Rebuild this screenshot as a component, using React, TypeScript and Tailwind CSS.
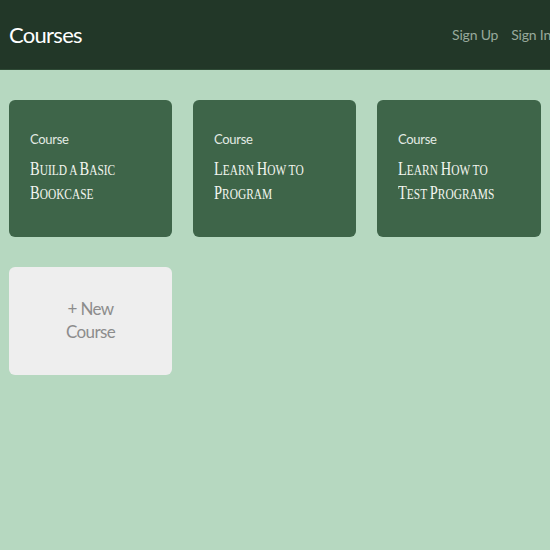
const courses = [
  { id: 1, lines: ["Build a Basic", "Bookcase"] },
  { id: 2, lines: ["Learn How to", "Program"] },
  { id: 3, lines: ["Learn How to", "Test Programs"] },
];

const sans = { fontFamily: 'Lato, "Liberation Sans", sans-serif' };
const serif = { fontFamily: '"Liberation Serif", serif' };

// hand-made small caps: capitals stay large, the rest is set in smaller capitals
function SmallCaps({ text }: { text: string }) {
  return (
    <>
      {text.split("").map((ch, i) =>
        ch >= "A" && ch <= "Z" ? (
          <span key={i} className="text-[19px]">
            {ch}
          </span>
        ) : (
          <span key={i} className="text-[15px] uppercase">
            {ch}
          </span>
        ),
      )}
    </>
  );
}

export default function App() {
  return (
    <div className="min-h-[550px] bg-[#b6d8c0]" style={sans}>
      <header className="flex h-[70px] items-center overflow-hidden border-b border-[#2f4a36] bg-[#223728] pl-[9px]">
        <h1 className="-mt-[1px] text-[22px] tracking-[-0.7px] text-white">Courses</h1>
        <nav className="ml-auto mr-[-1px] -mt-[1px] flex gap-[13px] text-[14px] tracking-[-0.2px] text-[#98a99b]">
          <a>Sign Up</a>
          <a>Sign In</a>
        </nav>
      </header>

      <main className="grid grid-cols-[163px_163px_164px] gap-x-[21px] gap-y-[30px] px-[9px] pt-[30px]">
        {courses.map((c) => (
          <div
            key={c.id}
            className="h-[137px] overflow-hidden rounded-[6px] bg-[#3e6549] px-[21px] pt-[30px]"
          >
            <div className="text-[13px] tracking-[-0.3px] text-[#e3ebe4]">Course</div>
            <h3
              className="mt-[7px] w-[170px] origin-left scale-x-[0.76] text-[#f3f5ef]"
              style={serif}
            >
              {c.lines.map((l) => (
                <div key={l} className="h-[24px] leading-[24px] whitespace-nowrap">
                  <SmallCaps text={l} />
                </div>
              ))}
            </h3>
          </div>
        ))}
        <div className="flex h-[108px] items-center justify-center rounded-[6px] bg-[#eeeeee] pb-[3px] text-center text-[17px] leading-[23px] tracking-[-0.6px] text-[#8c8c8c]">
          <span>
            + New
            <br />
            Course
          </span>
        </div>
      </main>
    </div>
  );
}
